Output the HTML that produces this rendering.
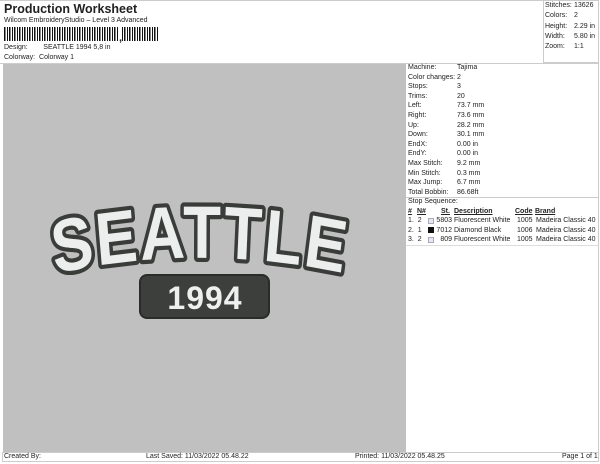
<!DOCTYPE html>
<html><head><meta charset="utf-8"><style>
*{margin:0;padding:0;box-sizing:border-box}
body{width:600px;height:464px;background:#fff;font-family:"Liberation Sans",sans-serif;color:#222;position:relative;overflow:hidden;font-size:7px}
.a{position:absolute;white-space:nowrap;line-height:10px}
</style></head><body>
<div class="a" style="left:4px;top:2px;font-size:12.5px;font-weight:bold;line-height:14px">Production Worksheet</div>
<div class="a" style="left:4px;top:16px">Wilcom EmbroideryStudio – Level 3 Advanced</div>
<div class="a" style="left:4px;top:27px;width:155px;height:14px;background:repeating-linear-gradient(90deg,#111 0 1.5px,#fff 1.5px 3px,#111 3px 4px,#fff 4px 5px)"></div>
<div style="position:absolute;left:118px;top:27px;width:4px;height:14px;background:#fff"></div>
<div class="a" style="left:119px;top:33px;font-size:11px;font-weight:bold">,</div>
<div class="a" style="left:4px;top:43px">Design:&nbsp;&nbsp;&nbsp;&nbsp;&nbsp;&nbsp;&nbsp;&nbsp;SEATTLE 1994 5,8 in</div>
<div class="a" style="left:4px;top:53px">Colorway:&nbsp;&nbsp;Colorway 1</div>
<div style="position:absolute;left:0;top:0;width:599px;height:1px;background:#ccc"></div>
<div style="position:absolute;left:543px;top:0;width:56px;height:63px;border:1px solid #ccc;border-top:none"></div>
<div style="position:absolute;left:0;top:63px;width:599px;height:1px;background:#ccc"></div>
<div class="a" style="left:545px;top:1px;line-height:10.3px">Stitches:<br>Colors:<br>Height:<br>Width:<br>Zoom:</div>
<div class="a" style="left:574px;top:1px;line-height:10.3px">13626<br>2<br>2.29 in<br>5.80 in<br>1:1</div>
<div style="position:absolute;left:3px;top:64px;width:403px;height:388px;background:#c0c0c0"></div>
<div style="position:absolute;left:598px;top:63px;width:1px;height:389px;background:#ccc"></div>
<div class="a" style="left:408px;top:63px;line-height:9.6px">Machine:<br>Color changes:<br>Stops:<br>Trims:<br>Left:<br>Right:<br>Up:<br>Down:<br>EndX:<br>EndY:<br>Max Stitch:<br>Min Stitch:<br>Max Jump:<br>Total Bobbin:</div>
<div class="a" style="left:457px;top:63px;line-height:9.6px">Tajima<br>2<br>3<br>20<br>73.7 mm<br>73.6 mm<br>28.2 mm<br>30.1 mm<br>0.00 in<br>0.00 in<br>9.2 mm<br>0.3 mm<br>6.7 mm<br>86.68ft</div>
<div style="position:absolute;left:406px;top:197px;width:192px;height:1px;background:#ccc"></div>
<div class="a" style="left:408px;top:197px">Stop Sequence:</div>
<div class="a" style="left:408px;top:207px;font-weight:bold;text-decoration:underline">#</div>
<div class="a" style="left:417px;top:207px;font-weight:bold;text-decoration:underline">N#</div>
<div class="a" style="left:441px;top:207px;font-weight:bold;text-decoration:underline">St.</div>
<div class="a" style="left:454px;top:207px;font-weight:bold;text-decoration:underline">Description</div>
<div class="a" style="left:515px;top:207px;font-weight:bold;text-decoration:underline">Code</div>
<div class="a" style="left:535px;top:207px;font-weight:bold;text-decoration:underline">Brand</div>
<div class="a" style="left:408px;top:216px;line-height:9.6px">1.&nbsp;&nbsp;2<br>2.&nbsp;&nbsp;1<br>3.&nbsp;&nbsp;2</div>
<div style="position:absolute;left:428px;top:218px;width:6px;height:6px;background:#e4e8f4;border:1px solid #aab"></div>
<div style="position:absolute;left:428px;top:227px;width:6px;height:6px;background:#111"></div>
<div style="position:absolute;left:428px;top:237px;width:6px;height:6px;background:#e4e8f4;border:1px solid #aab"></div>
<div class="a" style="left:436px;top:216px;line-height:9.6px;text-align:right;width:16px">5803<br>7012<br>809</div>
<div class="a" style="left:454px;top:216px;line-height:9.6px">Fluorescent White<br>Diamond Black<br>Fluorescent White</div>
<div class="a" style="left:517px;top:216px;line-height:9.6px">1005<br>1006<br>1005</div>
<div class="a" style="left:536px;top:216px;line-height:9.6px">Madeira Classic 40<br>Madeira Classic 40<br>Madeira Classic 40</div>
<div style="position:absolute;left:406px;top:245px;width:192px;height:1px;background:#ddd"></div>
<div style="position:absolute;left:2px;top:452px;width:597px;height:10px;border:1px solid #ccc"></div>
<div class="a" style="left:4px;top:452px">Created By:</div>
<div class="a" style="left:146px;top:452px">Last Saved: 11/03/2022 05.48.22</div>
<div class="a" style="left:355px;top:452px">Printed: 11/03/2022 05.48.25</div>
<div class="a" style="left:562px;top:452px">Page 1 of 1</div>
<svg style="position:absolute;left:0;top:0" width="600" height="464">
<defs><path id="arc" d="M 30 233 A 808 808 0 0 1 370 233"/></defs>
<g transform="scale(1,1.2)">
<text font-family="Liberation Sans,sans-serif" font-weight="bold" font-size="62" letter-spacing="2" fill="#eceeee" stroke="#3a3c3a" stroke-width="7" paint-order="stroke" stroke-linejoin="round"><textPath href="#arc" startOffset="50%" text-anchor="middle">SEATTLE</textPath></text>
</g>
<rect x="140" y="275" width="129" height="43" rx="7" fill="#3c3f3c" stroke="#2a2c2a" stroke-width="2"/>
<text x="205" y="309" font-family="Liberation Sans,sans-serif" font-weight="bold" font-size="32" fill="#eef0f0" text-anchor="middle" letter-spacing="1">1994</text>
</svg>
</body></html>
